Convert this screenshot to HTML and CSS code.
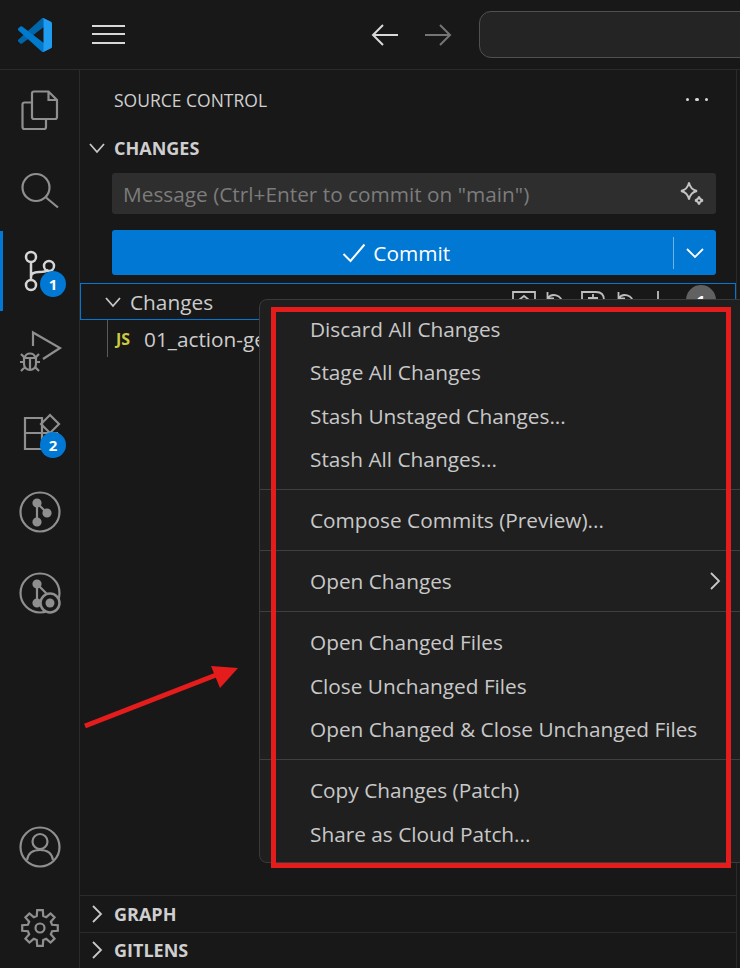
FILE: index.html

```html
<!DOCTYPE html>
<html lang="en">
<head>
  <meta charset="UTF-8" />
  <meta name="viewport" content="width=device-width, initial-scale=1.0"/>
  <title>Source Control</title>
  <link rel="stylesheet" href="styles.css">
</head>
<body>
  <div class="window">
    <div class="titlebar">
      <svg class="logo" viewBox="0 0 100 100">
        <path fill="#0065a9" d="M96.46 10.8 75.86.87a6.23 6.23 0 0 0-7.1 1.21L1.3 63.6a4.16 4.16 0 0 0 0 6.16l5.5 5a4.16 4.16 0 0 0 5.32.24L93.37 13.37c2.73-2.07 6.63-.12 6.63 3.3v-.24a6.25 6.25 0 0 0-3.54-5.63z"/>
        <path fill="#007acc" d="M96.46 89.2 75.86 99.13a6.23 6.23 0 0 1-7.1-1.21L1.3 36.4a4.16 4.16 0 0 1 0-6.16l5.5-5a4.16 4.16 0 0 1 5.32-.24L93.37 86.63c2.73 2.07 6.63.12 6.63-3.3v.24a6.25 6.25 0 0 1-3.54 5.63z"/>
        <path fill="#1f9cf0" d="M75.86 99.13a6.23 6.23 0 0 1-7.1-1.2c2.3 2.3 6.24.67 6.24-2.6V4.67c0-3.27-3.94-4.9-6.25-2.6a6.23 6.23 0 0 1 7.1-1.2l20.6 9.91A6.25 6.25 0 0 1 100 16.4v67.2a6.25 6.25 0 0 1-3.54 5.63z"/>
      </svg>
      <div class="hamburger"><span></span><span></span><span></span></div>
      <div class="nav">
        <svg class="nav-arrow" viewBox="0 0 28 24"><path d="M27 12H2M12 2 2 12l10 10"/></svg>
        <svg class="nav-arrow off" viewBox="0 0 28 24"><path d="M1 12h25M16 2l10 10-10 10"/></svg>
      </div>
      <div class="command-box"></div>
    </div>

    <div class="main">
      <div class="activity">
        <div class="activity-top">
          <div class="act-item">
            <svg class="icon" viewBox="0 0 40 40"><path d="M12 12V3.5a2 2 0 0 1 2-2h14.5L37 10v17a2 2 0 0 1-2 2H14a2 2 0 0 1-2-2zM28.500 1.500V10H37M12 12.500H4.500a2 2 0 0 0-2 2V37a2 2 0 0 0 2 2H24a2 2 0 0 0 2-2v-8"/></svg>
          </div>
          <div class="act-item">
            <svg class="icon" viewBox="0 0 40 40"><circle cx="16" cy="16.500" r="13.500"/><path d="m26 26.500 12 10"/></svg>
          </div>
          <div class="act-item active">
            <svg class="icon" viewBox="0 0 40 40"><circle cx="11" cy="6" r="5"/><circle cx="29" cy="15" r="5"/><circle cx="11" cy="34" r="5"/><path d="M11 11v18M11 26c0-4 3-5 8-5 5 0 8-1 9.500-2"/></svg>
            <span class="badge">1</span>
          </div>
          <div class="act-item">
            <svg class="icon" viewBox="0 0 40 40"><path d="M13 15V1.500L40 17 23 28"/><path d="M5 27c0-6 10-6 10 0M4 27h12v6a6 6 0 0 1-12 0zM10 27v11M4 31H0M16 31h4M1 23l4 4M19 23l-4 4M1 40l4-4M19 40l-4-4"/></svg>
          </div>
          <div class="act-item">
            <svg class="icon" viewBox="0 0 40 40"><path d="M5 6h17v31H5zM5 21h33M22 21v16h16V21"/><path d="m30 3 9 9-9 9-9-9z"/></svg>
            <span class="badge">2</span>
          </div>
          <div class="act-item">
            <svg class="icon" viewBox="0 0 40 40"><circle cx="20" cy="20" r="19.500"/><path d="M17 11v19M17 11l10 10"/><g class="dots"><circle cx="17" cy="11" r="3.500"/><circle cx="27" cy="21" r="3.500"/><circle cx="17" cy="30" r="3.500"/></g></svg>
          </div>
          <div class="act-item">
            <svg class="icon" viewBox="0 0 40 40"><circle cx="20" cy="20" r="19.500"/><path d="M17 11v19M17 11l10 10"/><g class="dots"><circle cx="17" cy="11" r="3.500"/><circle cx="17" cy="30" r="3.500"/></g><circle class="lens" cx="30" cy="30" r="9.500"/><circle class="lens-dot" cx="30" cy="30" r="4.500"/></svg>
          </div>
        </div>
        <div class="activity-bottom">
          <div class="act-item">
            <svg class="icon" viewBox="0 0 40 40"><circle cx="20" cy="20" r="19.500"/><circle cx="20" cy="14.500" r="7.500"/><path d="M7 33c1-7 6-10 13-10s12 3 13 10"/></svg>
          </div>
          <div class="act-item">
            <svg class="icon" viewBox="0 0 40 40"><path d="M16.760 7.930 17.180 2.220H22.820L23.240 7.930 26.250 9.170 30.580 5.440 34.560 9.420 30.830 13.750 32.070 16.760 37.780 17.180V22.820L32.070 23.240 30.830 26.250 34.560 30.580 30.580 34.560 26.250 30.830 23.240 32.070 22.820 37.780H17.180L16.760 32.070 13.750 30.830 9.420 34.560 5.440 30.580 9.170 26.250 7.930 23.240 2.220 22.820V17.180L7.930 16.760 9.170 13.750 5.440 9.420 9.420 5.440 13.750 9.170z"/><circle cx="20" cy="20" r="4.500"/></svg>
          </div>
        </div>
      </div>

      <div class="sidebar">
        <div class="view-title">
          <span>SOURCE CONTROL</span>
          <div class="more"><i></i><i></i><i></i></div>
        </div>
        <div class="section-head">
          <svg class="chev" viewBox="0 0 18 18"><path d="m2 5 7 8 7-8"/></svg>
          <span>CHANGES</span>
        </div>
        <div class="scm-box">
          <div class="message">
            <span>Message (Ctrl+Enter to commit on "main")</span>
            <svg class="sparkle" viewBox="0 0 26 26"><path d="M10 1.500c1 5 3 7.500 8 8.500-5 1-7 3.500-8 8.500-1-5-3-7.500-8-8.500 5-1 7-3.500 8-8.500zM20 15.500c.5 2.500 1.500 3.500 4 4-2.500.5-3.500 1.500-4 4-.5-2.500-1.500-3.500-4-4 2.500-.5 3.500-1.500 4-4z"/></svg>
          </div>
          <div class="commit">
            <div class="commit-label">
              <svg class="check" viewBox="0 0 24 20"><path d="m1.500 11 7 7L22.500 1.500"/></svg>
              <span>Commit</span>
            </div>
            <div class="commit-split"></div>
            <svg class="chev commit-chev" viewBox="0 0 18 18"><path d="m1 5 8 8 8-8"/></svg>
          </div>
        </div>
        <div class="group-row">
          <svg class="chev" viewBox="0 0 18 18"><path d="m2 5 7 8 7-8"/></svg>
          <span class="group-name">Changes</span>
          <div class="row-actions">
            <svg class="row-icon" viewBox="0 0 24 24"><path d="M1 23V1h22v22M7 9l5-4 5 4"/></svg>
            <svg class="row-icon undo-a" viewBox="0 0 18 24"><path d="M1.500 1v6.500H8M1.500 7.500c4-6 14.500-4 14.500 5"/></svg>
            <svg class="row-icon" viewBox="0 0 24 24"><path d="M1 23V1h14c5 0 8 3 8 8v14M12 3v8M7 7h10"/></svg>
            <svg class="row-icon undo-b" viewBox="0 0 18 24"><path d="M1.500 1v6.500H8M1.500 7.500c4-6 14.500-4 14.500 5"/></svg>
            <svg class="row-icon tick" viewBox="0 0 4 24"><path d="M2 0v20"/></svg>
            <span class="count">1</span>
          </div>
        </div>
        <div class="file-row">
          <span class="js">JS</span>
          <span>01_action-ge</span>
        </div>

        <div class="collapsed first">
          <svg class="chev" viewBox="0 0 18 18"><path d="m5 1 8 8-8 8"/></svg>
          <span>GRAPH</span>
        </div>
        <div class="collapsed">
          <svg class="chev" viewBox="0 0 18 18"><path d="m5 1 8 8-8 8"/></svg>
          <span>GITLENS</span>
        </div>
      </div>
    </div>

    <div class="menu">
      <div class="menu-item">Discard All Changes</div>
      <div class="menu-item">Stage All Changes</div>
      <div class="menu-item">Stash Unstaged Changes...</div>
      <div class="menu-item">Stash All Changes...</div>
      <div class="menu-sep"></div>
      <div class="menu-item">Compose Commits (Preview)...</div>
      <div class="menu-sep"></div>
      <div class="menu-item">Open Changes
        <svg class="chev menu-chev" viewBox="0 0 18 18"><path d="m5 1 8 8-8 8"/></svg>
      </div>
      <div class="menu-sep"></div>
      <div class="menu-item">Open Changed Files</div>
      <div class="menu-item">Close Unchanged Files</div>
      <div class="menu-item">Open Changed &amp; Close Unchanged Files</div>
      <div class="menu-sep"></div>
      <div class="menu-item">Copy Changes (Patch)</div>
      <div class="menu-item">Share as Cloud Patch...</div>
    </div>

    <div class="red-box"></div>
    <svg class="red-arrow" viewBox="0 0 740 968"><path d="M85 726 216 675" stroke="#e51c1c" stroke-width="5"/><path d="M238 668 211 666 220 688z" fill="#e51c1c"/></svg>
  </div>
</body>
</html>
```

FILE: styles.css

```css
* {
  box-sizing: border-box;
}
html, body {
  margin: 0;
  padding: 0;
  height: 100%;
  overflow: hidden;
}
body {
  font-family: "Open Sans", "Noto Sans", sans-serif;
  background: #181818;
  color: #ccc;
}
.window {
  position: relative;
  width: 740px;
  height: 968px;
  display: flex;
  flex-direction: column;
  overflow: hidden;
}

/* title bar */
.titlebar {
  height: 70px;
  flex-shrink: 0;
  display: flex;
  align-items: center;
  padding-left: 18px;
  border-bottom: 1px solid #2b2b2b;
}
.logo {
  width: 34px;
  height: 34px;
  flex-shrink: 0;
  margin-right: 40px;
}
.hamburger {
  width: 33px;
  flex-shrink: 0;
  display: flex;
  flex-direction: column;
  gap: 6.500px;
  margin-top: -1px;
}
.hamburger span {
  display: block;
  height: 2px;
  background: #d8d8d8;
}
.nav {
  display: flex;
  flex-shrink: 0;
  gap: 25px;
  margin-left: 246px;
}
.nav-arrow {
  width: 28px;
  height: 24px;
  fill: none;
  stroke: #d8d8d8;
  stroke-width: 2;
}
.nav-arrow.off {
  stroke: #757575;
}
.command-box {
  width: 300px;
  height: 47px;
  margin-left: 27px;
  flex-shrink: 0;
  background: #242424;
  border: 1.500px solid #505050;
  border-radius: 12px;
}

.main {
  flex: 1;
  display: flex;
  min-height: 0;
}

/* activity bar */
.activity {
  width: 80px;
  flex-shrink: 0;
  display: flex;
  flex-direction: column;
  justify-content: space-between;
  border-right: 1px solid #2b2b2b;
}
.act-item {
  position: relative;
  height: 80.400px;
  display: flex;
  align-items: center;
  justify-content: center;
}
.act-item.active::before {
  content: "";
  position: absolute;
  left: 0;
  top: 0;
  bottom: 0;
  width: 3px;
  background: #0078d4;
}
.icon {
  width: 40px;
  height: 40px;
  fill: none;
  stroke: #8f8f8f;
  stroke-width: 2.200;
  overflow: visible;
}
.active .icon {
  stroke: #d6d6d6;
  stroke-width: 2.500;
}
.dots circle {
  fill: #8f8f8f;
}
.lens {
  fill: #181818;
  stroke-width: 2.500;
}
.lens-dot {
  fill: #8f8f8f;
  stroke: none;
}
.badge {
  position: absolute;
  left: 40px;
  top: 40px;
  width: 26px;
  height: 26px;
  border-radius: 50%;
  background: #0078d4;
  color: #fff;
  font-size: 15px;
  font-weight: 700;
  display: flex;
  align-items: center;
  justify-content: center;
}

/* sidebar */
.sidebar {
  width: 657px;
  flex-shrink: 0;
  display: flex;
  flex-direction: column;
  border-right: 1px solid #2b2b2b;
}
.view-title {
  height: 59px;
  display: flex;
  align-items: center;
  justify-content: space-between;
  padding: 0 28px 0 34px;
  font-size: 17.500px;
  color: #cfcfcf;
}
.more {
  display: flex;
  gap: 6px;
}
.more i {
  width: 3.500px;
  height: 3.500px;
  border-radius: 50%;
  background: #d8d8d8;
}
.chev {
  width: 18px;
  height: 18px;
  flex-shrink: 0;
  fill: none;
  stroke: #c8c8c8;
  stroke-width: 1.800;
}
.section-head {
  height: 37px;
  display: flex;
  align-items: center;
  gap: 8px;
  padding-left: 8px;
  font-size: 18px;
  font-weight: 700;
  color: #cfcfcf;
}
.scm-box {
  display: flex;
  flex-direction: column;
  gap: 16px;
  margin: 7px 20px 0 32px;
}
.message {
  height: 41px;
  display: flex;
  align-items: center;
  justify-content: space-between;
  padding: 0 11px;
  background: #2e2e2e;
  border-radius: 3px;
  font-size: 20.800px;
  color: #7c7c7c;
  white-space: nowrap;
}
.sparkle {
  width: 26px;
  height: 26px;
  fill: none;
  stroke: #c4c4c4;
  stroke-width: 1.800;
}
.commit {
  height: 45px;
  display: flex;
  align-items: center;
  background: #0078d4;
  border-radius: 3px;
  color: #fff;
  font-size: 20.800px;
}
.commit-label {
  flex: 1;
  display: flex;
  align-items: center;
  justify-content: center;
  gap: 7px;
  padding-left: 8px;
}
.check {
  width: 24px;
  height: 20px;
  fill: none;
  stroke: #fff;
  stroke-width: 2;
}
.commit-split {
  width: 1.500px;
  height: 32px;
  background: #6db4e8;
}
.commit-chev {
  margin: 0 12px;
  stroke: #fff;
}
.group-row {
  height: 37px;
  margin-top: 8px;
  display: flex;
  align-items: center;
  padding-left: 23px;
  gap: 8px;
  border: 1px solid #0078d4;
  font-size: 20.800px;
}
.row-actions {
  margin-left: auto;
  display: flex;
  align-items: flex-start;
  height: 100%;
  padding: 7px 19px 0 0;
}
.row-icon {
  width: 24px;
  height: 24px;
  flex-shrink: 0;
  fill: none;
  stroke: #bdbdbd;
  stroke-width: 1.800;
}
.undo-a {
  width: 18px;
  margin: 0 17px 0 10px;
}
.undo-b {
  width: 18px;
  margin: 0 21px 0 12px;
}
.tick {
  width: 4px;
  margin-right: 26px;
}
.count {
  width: 30px;
  height: 30px;
  margin-top: -6px;
  border-radius: 50%;
  background: #616161;
  color: #fff;
  font-size: 15px;
  font-weight: 700;
  text-align: center;
  line-height: 30px;
}
.file-row {
  height: 37px;
  margin-left: 27px;
  padding-left: 8px;
  display: flex;
  align-items: center;
  gap: 12px;
  border-left: 1px solid #5a5a5a;
  font-size: 20.800px;
  white-space: nowrap;
}
.js {
  width: 16px;
  font-size: 16px;
  font-weight: 700;
  color: #cbcb41;
}
.collapsed {
  height: 36.500px;
  display: flex;
  align-items: center;
  gap: 8px;
  padding-left: 8px;
  border-top: 1px solid #2b2b2b;
  font-size: 18px;
  font-weight: 700;
  color: #cfcfcf;
}
.collapsed.first {
  margin-top: auto;
}

/* context menu */
.menu {
  position: absolute;
  left: 259px;
  top: 299px;
  width: 500px;
  padding: 7px 0 6.500px;
  background: #1f1f1f;
  border: 1px solid #3a3a3a;
  border-radius: 8px;
  font-size: 20.800px;
  color: #c8c8c8;
}
.menu-item {
  height: 43.500px;
  display: flex;
  align-items: center;
  padding-left: 50px;
  white-space: nowrap;
}
.menu-chev {
  position: absolute;
  left: 446px;
  width: 18px;
}
.menu-sep {
  height: 1px;
  margin: 8.250px 0;
  background: #3f3f3f;
}

/* annotations */
.red-box {
  position: absolute;
  left: 271px;
  top: 307px;
  width: 460px;
  height: 561px;
  border: 5px solid #e51c1c;
}
.red-arrow {
  position: absolute;
  left: 0;
  top: 0;
  width: 740px;
  height: 968px;
  pointer-events: none;
}
```
